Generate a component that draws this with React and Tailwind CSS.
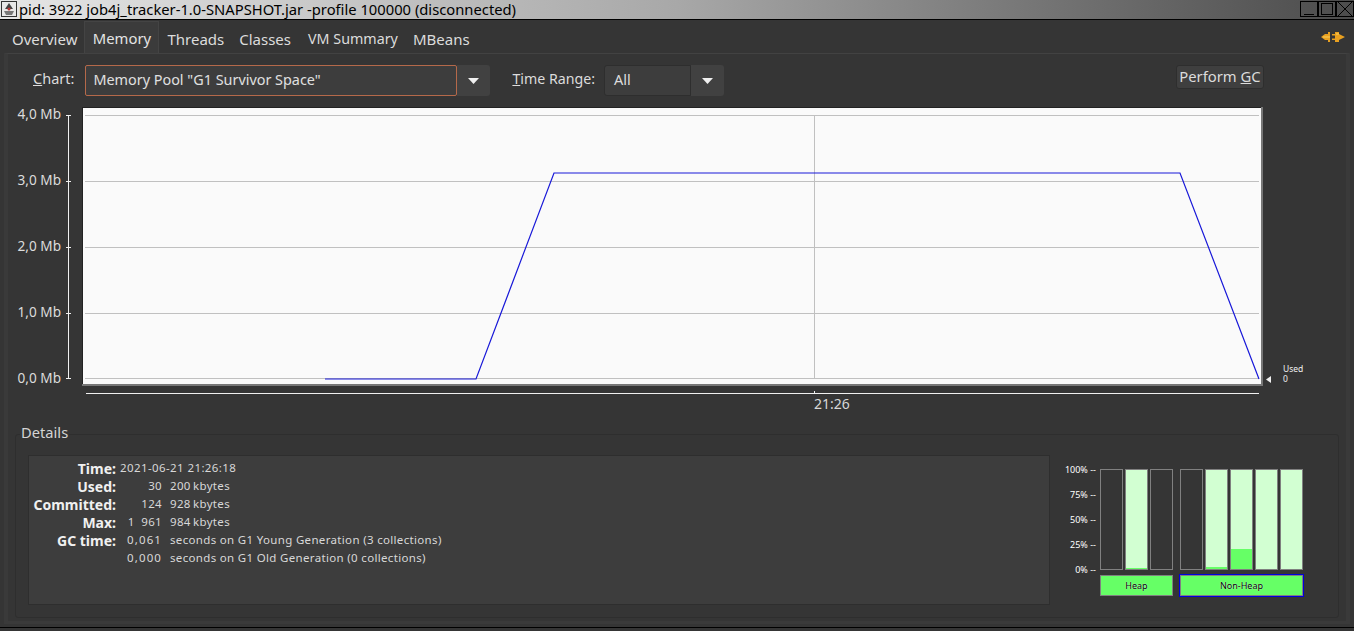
const Bar = ({ fill = 0, empty = false, ml = '' }) => (
  <div className={`w-[23px] h-[101px] border border-[#808080] flex flex-col justify-end ${empty ? 'bg-[#353535]' : 'bg-[#d2ffd2]'} ${ml}`}>
    <div className="bg-[#66ff66]" style={{ height: fill }} />
  </div>
);

const Arrow = () => (
  <svg width="11" height="6" viewBox="0 0 11 6"><path d="M0 0H11L5.5 6Z" fill="#f0f0f0" /></svg>
);

const Row = ({ label, children }) => (
  <div className="flex h-[18px] items-center">
    <div className="w-[87px] text-right font-bold text-[14px] text-[#f0f0f0] shrink-0">{label}</div>
    <div className="flex items-center ml-[4px] text-[11.5px] tracking-[0.33px] text-[#d8d8d8]">{children}</div>
  </div>
);

const PctRow = ({ t }) => <div className="h-[9px] leading-[9px] text-[9px] text-white text-right whitespace-nowrap">{t} --</div>;

const tabs = [
  ['Overview', 'ml-[12px] text-[15px]'],
  ['Memory', 'active'],
  ['Threads', 'ml-[8px] text-[15px]'],
  ['Classes', 'ml-[15px] text-[15px]'],
  ['VM Summary', 'ml-[17px] text-[14.3px]'],
  ['MBeans', 'ml-[15px] text-[15px]'],
];

export default function App() {
  return (
    <div className="w-[1354px] h-[631px] bg-[#353535] flex flex-col overflow-hidden text-[#dcdcdc] [font-family:'Noto_Sans',sans-serif] text-[14.5px]">
      {/* Title bar */}
      <div className="h-[20px] shrink-0 border-b-[1px] border-black bg-gradient-to-r from-[#e6e6e6] via-[#a8a8a8] to-[#4c4c4c] flex items-center text-black">
        <svg width="17" height="17" viewBox="0 0 17 17" className="shrink-0 ml-[1px]">
          <rect x="0.5" y="0.5" width="15" height="15" fill="#e8e8e8" stroke="#333" />
          <path d="M8 2L12 8H4Z" fill="#444" />
          <path d="M3 10H13L11 14H5Z" fill="#777" />
          <circle cx="8" cy="8" r="1.5" fill="#b33" />
        </svg>
        <div className="ml-[1px] text-[14.75px] leading-[19px] whitespace-nowrap">pid: 3922 job4j_tracker-1.0-SNAPSHOT.jar -profile 100000 (disconnected)</div>
        <div className="ml-auto flex">
          {[
            <path key="a" d="M4 13.5H14" />,
            <rect key="b" x="3.5" y="2.5" width="11" height="11" />,
            <path key="c" d="M2 1L16 15M16 1L2 15" />,
          ].map((p, i) => (
            <svg key={i} width="18" height="16" viewBox="0 0 18 16" fill="none" stroke="#000" className="-mt-[2px]">
              <rect x="0.5" y="0.5" width="17" height="15" />
              {p}
            </svg>
          ))}
        </div>
      </div>

      {/* Tabs */}
      <div className="h-[33px] shrink-0 flex items-end relative">
        {tabs.map(([t, c]) => (
          <div
            key={t}
            className={c === 'active'
              ? 'ml-[7px] h-[32px] w-[75px] flex items-center justify-center bg-[#3b3b3b] border border-b-0 border-[#444444] text-[#e4e4e4] text-[14.8px] pt-[2px]'
              : `h-[32px] flex items-center text-[#dcdcdc] pt-[4px] ${c}`}
          >
            {t}
          </div>
        ))}
        <svg width="24" height="12" viewBox="0 0 24 12" className="ml-auto mr-[9px] mb-[10px]">
          <path d="M0 6L4 3H7V1H9V11H7V9H4Z" fill="#e8a020" />
          <path d="M11 3H14V1H18V3L24 6L18 9V11H14V9H11V7.5H14V4.5H11Z" fill="#e8a020" />
          <path d="M2 6H9M15 3H18" stroke="#f8d060" strokeWidth="1" />
        </svg>
      </div>

      {/* Panel */}
      <div className="mx-[4px] h-[571px] shrink-0 border-x-[4px] border-x-[#3a3a3a] border-t border-t-[#424242] border-b-[3px] border-b-[#3a3a3a] flex flex-col pl-[7px]">
        {/* Controls */}
        <div className="flex items-start mt-[11px] h-[31px] shrink-0">
          <div className="ml-[18px] h-[31px] flex items-center pb-[3px]"><span><u>C</u>hart:</span></div>
          <div className="ml-[11px] flex h-[31px]">
            <div className="w-[372px] border border-[#b5694a] rounded-[2px] bg-[#3d3d3d] flex items-center pl-[7px] pb-[2px] text-[#e0e0e0] text-[14.4px]">Memory Pool "G1 Survivor Space"</div>
            <div className="w-[33px] bg-[#414141] rounded-r-[3px] flex items-center justify-center"><Arrow /></div>
          </div>
          <div className="ml-[22px] h-[31px] flex items-center pb-[3px] text-[14.2px]"><span><u>T</u>ime Range:</span></div>
          <div className="ml-[9px] flex h-[31px]">
            <div className="w-[87px] bg-[#3d3d3d] border border-[#2e2e2e] rounded-l-[3px] flex items-center pl-[9px] pb-[2px]">All</div>
            <div className="w-[33px] bg-[#414141] rounded-r-[3px] flex items-center justify-center"><Arrow /></div>
          </div>
          <div className="ml-auto mr-[82px] w-[88px] h-[24px] bg-[#3f3f3f] border border-[#2e2e2e] rounded-[3px] flex items-center justify-center whitespace-nowrap text-[14.8px] pb-[1px]"><span>Perform <u>G</u>C</span></div>
        </div>

        {/* Chart */}
        <div className="flex mt-[12px] h-[276px] shrink-0 -ml-[10px]">
          <div className="w-[77px] shrink-0 relative">
            <div className="flex flex-col gap-[52px] w-[56px] -mt-[1px] text-[13.6px]">
              {['4,0 Mb', '3,0 Mb', '2,0 Mb', '1,0 Mb', '0,0 Mb'].map((t) => (
                <div key={t} className="h-[14px] leading-[14px] text-right whitespace-nowrap">{t}</div>
              ))}
            </div>
            <svg width="10" height="276" className="absolute left-[61px] top-0" stroke="#f0f0f0" shapeRendering="crispEdges">
              <path d="M2.5 7V271M0 7.5H5M0 73.5H5M0 139.5H5M0 205.5H5M0 270.5H5" fill="none" />
            </svg>
          </div>
          <svg width="1181" height="279" viewBox="0 0 1181 279" className="shrink-0 block -mt-[1px]">
            <rect x="1" y="1" width="1179" height="276" fill="#fafafa" />
            <path d="M0 0.5H1181M0.5 0V278" stroke="#222" fill="none" />
            <path d="M1180 0V279M0 278H1181" stroke="#777" strokeWidth="2" fill="none" />
            <g stroke="#c0c0c0" shapeRendering="crispEdges">
              <path d="M3 8.5H1177M3 74.5H1177M3 140.5H1177M3 206.5H1177M3 271.5H1177M732.5 8V272" />
            </g>
            <polyline points="243,272 394,272 472,66 1098,66 1177,272" fill="none" stroke="#1818d8" strokeWidth="1.2" />
          </svg>
          <div className="relative flex-1 flex items-start">
            <div className="ml-[3px] mt-[266px] flex items-center">
              <svg width="6" height="7" viewBox="0 0 6 7"><path d="M0 3.5L5 0V7Z" fill="#f0f0f0" /></svg>
              <div className="ml-[11px] text-[8.5px] leading-[10px] -mt-[10px] text-[#f0f0f0]">Used<br />0</div>
            </div>
          </div>
        </div>

        {/* X axis */}
        <div className="h-[39px] shrink-0 -ml-[10px]">
          <svg width="1260" height="11" className="block" stroke="#f0f0f0" shapeRendering="crispEdges">
            <path d="M81 9.5H1254M809.5 7V10" fill="none" />
          </svg>
          <div className="ml-[809px] text-[14px] leading-[18px] text-[#d8d8d8]">21:26</div>
        </div>

        {/* Details */}
        <fieldset className="w-[1324px] h-[196px] border border-[#2e2e2e] rounded-[3px] px-[12px] shrink-0 -mt-[1px]">
          <legend className="-ml-[8px] text-[14.7px] leading-[20px] pb-[4px] px-[1px] text-[#d4d4d4]">Details</legend>
          <div className="flex mt-[9px]">
            <div className="w-[1022px] h-[150px] bg-[#3d3d3d] border border-[#2e2e2e] pt-[3px] shrink-0">
              <Row label="Time:"><span className="whitespace-nowrap tracking-[0.4px]">2021-06-21 21:26:18</span></Row>
              <Row label="Used:"><span className="w-[42px] text-right">30</span><span className="ml-[8px] w-[23px]">200</span><span>kbytes</span></Row>
              <Row label="Committed:"><span className="w-[42px] text-right">124</span><span className="ml-[8px] w-[23px]">928</span><span>kbytes</span></Row>
              <Row label="Max:"><span className="w-[42px] text-right whitespace-pre">1  961</span><span className="ml-[8px] w-[23px]">984</span><span>kbytes</span></Row>
              <Row label="GC time:"><span className="w-[42px] text-right tracking-[1.1px]">0,061</span><span className="ml-[8px] whitespace-nowrap">seconds on G1 Young Generation (3 collections)</span></Row>
              <Row label=""><span className="w-[42px] text-right tracking-[1.1px]">0,000</span><span className="ml-[8px] whitespace-nowrap">seconds on G1 Old Generation (0 collections)</span></Row>
            </div>
            <div className="ml-[6px] w-[40px] mt-[10px] flex flex-col gap-[16px] shrink-0">
              {['100%', '75%', '50%', '25%', '0%'].map((t) => <PctRow key={t} t={t} />)}
            </div>
            <div className="ml-[4px] mt-[14px] flex flex-col shrink-0">
              <div className="flex">
                <Bar empty />
                <Bar ml="ml-[2px]" fill={1} />
                <Bar ml="ml-[2px]" empty />
                <Bar ml="ml-[7px]" empty />
                <Bar ml="ml-[2px]" fill={2} />
                <Bar ml="ml-[2px]" fill={20} />
                <Bar ml="ml-[2px]" />
                <Bar ml="ml-[2px]" />
              </div>
              <div className="flex mt-[5px]">
                <div className="w-[73px] h-[21px] bg-[#66ff66] border border-[#808080] flex items-center justify-center text-[9px] text-black [text-shadow:0_0_1px_white]">Heap</div>
                <div className="ml-[7px] w-[123px] h-[21px] bg-[#66ff66] border border-[#808080] outline outline-1 outline-[#0000e0] flex items-center justify-center text-[9px] text-black [text-shadow:0_0_1px_white]">Non-Heap</div>
              </div>
            </div>
          </div>
        </fieldset>
      </div>
      <div className="mt-[3px] h-[1px] bg-black shrink-0" />
    </div>
  );
}
